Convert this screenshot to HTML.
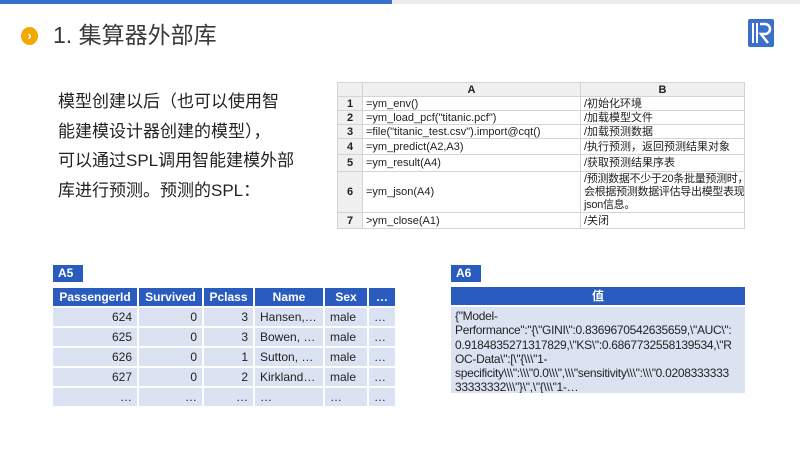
<!DOCTYPE html>
<html><head><meta charset="utf-8"><style>
*{margin:0;padding:0;box-sizing:border-box}
body{width:800px;height:450px;background:#fff;position:relative;overflow:hidden;font-family:"Liberation Sans","Noto Sans CJK SC",sans-serif;color:#222}
.a{position:absolute}
table{border-collapse:collapse;position:absolute}
.st{table-layout:fixed}
.st td{border:1px solid #d4d4d4;font-size:11px;height:14px;padding:0 3px;white-space:nowrap;line-height:12px;overflow:hidden}
.st td.n{background:#f0f0f0;text-align:center;font-weight:bold;font-size:11px}
.st tr.h td{background:#f0f0f0;text-align:center;font-weight:bold}
.dt td{border:2px solid #fff;font-size:12px;height:20px;padding:0 5px;background:#dbe3f3;white-space:nowrap}
.dt tr.h td{background:#2a5bbf;color:#fff;font-weight:bold;text-align:center;height:20px}
.lab{background:#2a5bbf;color:#fff;font-weight:bold;font-size:12px;height:17px;line-height:17px;padding-left:5px}
</style></head><body>
<div class="a" style="left:0;top:0;width:392px;height:4px;background:#3a6fcc"></div>
<div class="a" style="left:392px;top:0;width:408px;height:4px;background:#ececec"></div>
<div class="a" style="left:21px;top:27px;width:17px;height:18px;border-radius:50%;background:#f2a900;color:#fff;font-size:13px;font-weight:bold;text-align:center;line-height:17px">›</div>
<div class="a" style="left:53px;top:20px;font-size:23px;color:#3a3a3a;line-height:30px">1. 集算器外部库</div>
<svg class="a" style="left:748px;top:19px" width="26" height="28" viewBox="0 0 26 28">
<rect x="0" y="0" width="26" height="28" rx="2" fill="#3a6fcc"/>
<rect x="4" y="4" width="2" height="20" fill="#fff"/>
<rect x="8" y="4" width="2" height="20" fill="#fff"/>
<path d="M12 5 H17 A5 5 0 0 1 17 15 H13 L20 24" stroke="#fff" stroke-width="2.5" fill="none"/>
</svg>
<div class="a" style="left:58px;top:87px;font-size:17px;line-height:29.5px;color:#222;white-space:nowrap">模型创建以后（也可以使用智<br>能建模设计器创建的模型），<br>可以通过SPL调用智能建模外部<br>库进行预测。预测的SPL：</div>
<table class="st" style="left:337px;top:82px;width:407px">
<colgroup><col style="width:25px"><col style="width:218px"><col style="width:164px"></colgroup>
<tr class="h"><td style="height:13px"></td><td>A</td><td>B</td></tr>
<tr><td class="n">1</td><td>=ym_env()</td><td>/初始化环境</td></tr>
<tr><td class="n">2</td><td>=ym_load_pcf("titanic.pcf")</td><td>/加载模型文件</td></tr>
<tr><td class="n">3</td><td>=file("titanic_test.csv").import@cqt()</td><td>/加载预测数据</td></tr>
<tr><td class="n" style="height:16px">4</td><td>=ym_predict(A2,A3)</td><td>/执行预测，返回预测结果对象</td></tr>
<tr><td class="n" style="height:17px">5</td><td>=ym_result(A4)</td><td>/获取预测结果序表</td></tr>
<tr><td class="n" style="height:41px">6</td><td>=ym_json(A4)</td><td style="line-height:13px;letter-spacing:-0.3px">/预测数据不少于20条批量预测时，<br>会根据预测数据评估导出模型表现<br>json信息。</td></tr>
<tr><td class="n" style="height:16px">7</td><td>&gt;ym_close(A1)</td><td>/关闭</td></tr>
</table>
<div class="a lab" style="left:53px;top:265px;width:30px">A5</div>
<table class="dt" style="left:51px;top:286px;width:346px">
<tr class="h"><td style="width:86px">PassengerId</td><td style="width:65px">Survived</td><td style="width:51px">Pclass</td><td style="width:70px">Name</td><td style="width:44px">Sex</td><td>…</td></tr>
<tr><td align="right">624</td><td align="right">0</td><td align="right">3</td><td>Hansen,…</td><td>male</td><td>…</td></tr>
<tr><td align="right">625</td><td align="right">0</td><td align="right">3</td><td>Bowen, …</td><td>male</td><td>…</td></tr>
<tr><td align="right">626</td><td align="right">0</td><td align="right">1</td><td>Sutton, …</td><td>male</td><td>…</td></tr>
<tr><td align="right">627</td><td align="right">0</td><td align="right">2</td><td>Kirkland…</td><td>male</td><td>…</td></tr>
<tr><td align="right">…</td><td align="right">…</td><td align="right">…</td><td>…</td><td>…</td><td>…</td></tr>
</table>
<div class="a lab" style="left:451px;top:265px;width:30px">A6</div>
<div class="a" style="left:451px;top:287px;width:294px;height:18px;background:#2a5bbf;color:#fff;font-weight:bold;font-size:12px;text-align:center;line-height:18px">值</div>
<div class="a" style="left:451px;top:307px;width:294px;height:86px;background:#dbe3f3;font-size:12px;line-height:14.3px;padding:2px 4px;white-space:nowrap;letter-spacing:-0.3px;color:#222;overflow:hidden">{"Model-<br>Performance":"{\"GINI\":0.8369670542635659,\"AUC\":<br>0.9184835271317829,\"KS\":0.6867732558139534,\"R<br>OC-Data\":[\"{\\\"1-<br>specificity\\\":\\\"0.0\\\",\\\"sensitivity\\\":\\\"0.0208333333<br>33333332\\\"}\",\"{\\\"1-…</div>
</body></html>
